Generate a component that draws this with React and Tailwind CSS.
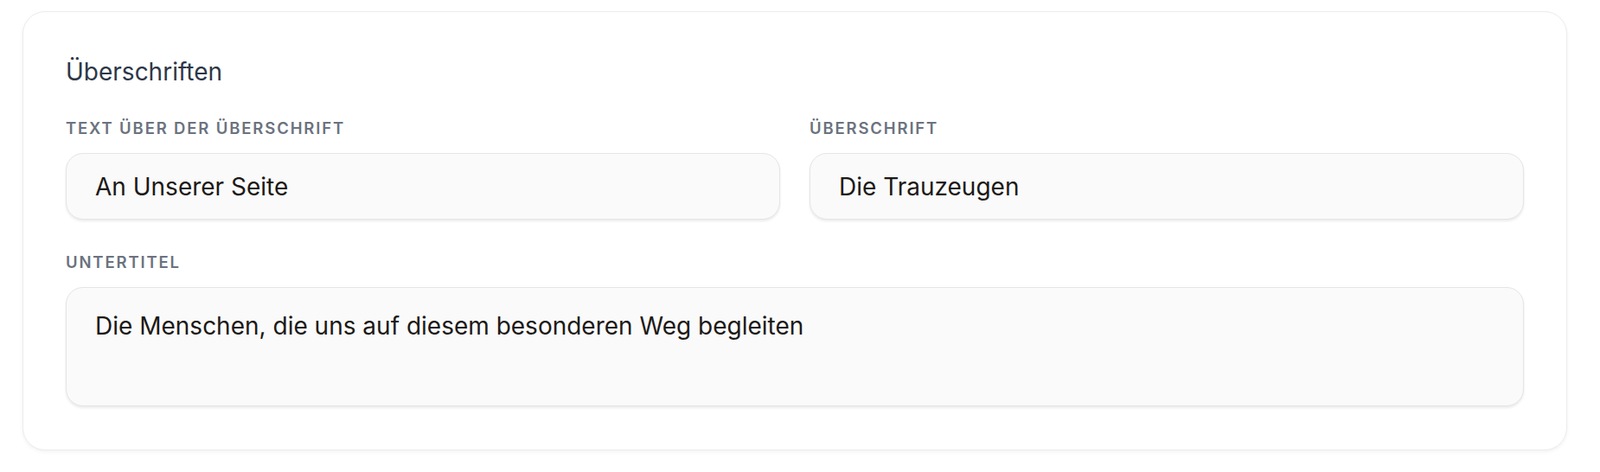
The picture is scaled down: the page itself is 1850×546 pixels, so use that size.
import React from 'react';

const fieldBase =
  'w-full bg-[#fafafa] border border-[#e5e5e5] rounded-[20px] shadow-[0_2px_3px_rgba(0,0,0,0.08)] px-[33px] text-[28px] text-[#1c1917] outline-none font-[Inter,sans-serif]';

const Label = ({ children }) => (
  <label className="block mb-[15px] text-[18.5px] leading-[27px] font-semibold uppercase tracking-[0.1em] text-[#6b7280]">
    {children}
  </label>
);

export default function App() {
  return (
    <div className="min-h-screen bg-white pl-[26px] pr-[38px] pt-[13px] font-[Inter,sans-serif]">
      <div className="bg-white border border-[#ececec] rounded-[26px] shadow-[0_2px_4px_rgba(0,0,0,0.05)] px-[49px] pt-[48px] pb-[50px]">
        <h2 className="text-[28px] leading-[42px] font-normal text-[#2d3748] mb-[31px]">Überschriften</h2>

        <div className="grid grid-cols-2 gap-x-[34px]">
          <div>
            <Label>Text über der Überschrift</Label>
            <input readOnly defaultValue="An Unserer Seite" className={`${fieldBase} h-[77px]`} />
          </div>
          <div>
            <Label>Überschrift</Label>
            <input readOnly defaultValue="Die Trauzeugen" className={`${fieldBase} h-[77px]`} />
          </div>
        </div>

        <div className="mt-[36px]">
          <Label>Untertitel</Label>
          <textarea
            readOnly
            rows={2}
            defaultValue="Die Menschen, die uns auf diesem besonderen Weg begleiten"
            className={`${fieldBase} h-[138px] pt-[23px] leading-[42px] resize-none block`}
          />
        </div>
      </div>
    </div>
  );
}
